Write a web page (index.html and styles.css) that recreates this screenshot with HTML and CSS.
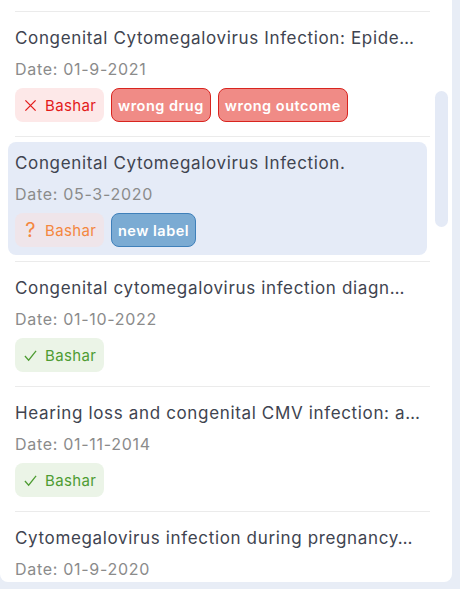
FILE: index.html
```html
<!DOCTYPE html>
<html>
<head>
<meta charset="utf-8">
<link rel="stylesheet" href="styles.css">
</head>
<body>
<div class="panel">
  <div class="list">
    <div class="divider"></div>
    <div class="item">
      <div class="title">Congenital Cytomegalovirus Infection: Epide…</div>
      <div class="date">Date: 01-9-2021</div>
      <div class="chips">
        <span class="chip chip-red"><svg class="ico" viewBox="0 0 14 14"><path d="M1.5 1.5 L12.5 12.5 M12.5 1.5 L1.5 12.5" /></svg>Bashar</span>
        <span class="tag tag-red">wrong drug</span>
        <span class="tag tag-red">wrong outcome</span>
      </div>
    </div>
    <div class="divider"></div>
    <div class="item selected">
      <div class="title">Congenital Cytomegalovirus Infection.</div>
      <div class="date">Date: 05-3-2020</div>
      <div class="chips">
        <span class="chip chip-orange"><span class="q">?</span>Bashar</span>
        <span class="tag tag-blue">new label</span>
      </div>
    </div>
    <div class="divider"></div>
    <div class="item">
      <div class="title">Congenital cytomegalovirus infection diagn…</div>
      <div class="date">Date: 01-10-2022</div>
      <div class="chips">
        <span class="chip chip-green"><svg class="ico" viewBox="0 0 14 14"><path d="M1 7.5 L5 12 L13 2" /></svg>Bashar</span>
      </div>
    </div>
    <div class="divider"></div>
    <div class="item">
      <div class="title">Hearing loss and congenital CMV infection: a…</div>
      <div class="date">Date: 01-11-2014</div>
      <div class="chips">
        <span class="chip chip-green"><svg class="ico" viewBox="0 0 14 14"><path d="M1 7.5 L5 12 L13 2" /></svg>Bashar</span>
      </div>
    </div>
    <div class="divider"></div>
    <div class="item">
      <div class="title">Cytomegalovirus infection during pregnancy…</div>
      <div class="date">Date: 01-9-2020</div>
    </div>
  </div>
  <div class="track"><div class="thumb"></div></div>
</div>
</body>
</html>
```
FILE: styles.css
```css
html, body {
  margin: 0;
  padding: 0;
}
body {
  background: #e8edf6;
  font-family: "Inter", "Noto Sans", sans-serif;
  width: 460px;
  height: 589px;
  overflow: hidden;
}
.panel {
  width: 452px;
  height: 582px;
  background: #ffffff;
  border-radius: 0 0 8px 8px;
  display: flex;
  overflow: hidden;
}
.list {
  width: 430px;
  padding-top: 11px;
  display: flex;
  flex-direction: column;
  flex: none;
}
.divider {
  height: 1px;
  margin-left: 15px;
  background: #ebebeb;
  flex: none;
}
.item {
  margin: 5px 3px 6px 8px;
  padding: 9px 7px 8px;
  border-radius: 8px;
  flex: none;
}
.item.selected {
  background: #e5ebf7;
}
.title {
  font-size: 17px;
  line-height: 24px;
  color: #404450;
  white-space: nowrap;
  letter-spacing: 0.65px;
}
.date {
  margin-top: 7px;
  font-size: 16px;
  line-height: 24px;
  color: #8b8b8b;
  letter-spacing: 0.7px;
}
.chips {
  margin-top: 7px;
  display: flex;
  gap: 7px;
  height: 34px;
}
.chip {
  display: flex;
  align-items: center;
  gap: 8px;
  padding: 0 0 0 9px;
  width: 80px;
  border-radius: 8px;
  font-size: 15px;
  letter-spacing: 0.35px;
}
.ico {
  width: 13px;
  height: 13px;
  fill: none;
  stroke: currentColor;
  stroke-width: 1.4;
  flex: none;
}
.q {
  display: inline-block;
  width: 13px;
  text-align: center;
  font-size: 20px;
  line-height: 1;
}
.chip-red {
  background: #fde8e8;
  color: #e31b1b;
}
.chip-orange {
  background: #efe5ea;
  color: #f4873f;
}
.chip-green {
  background: #ebf4e7;
  color: #4e9c33;
}
.tag {
  display: flex;
  align-items: center;
  padding: 0 6px;
  border-radius: 8px;
  border: 1px solid;
  font-size: 14.5px;
  font-weight: 600;
  letter-spacing: 0.5px;
  color: #ffffff;
  box-sizing: border-box;
  height: 34px;
}
.tag-red {
  background: #f08b86;
  border-color: #d9241f;
}
.tag-blue {
  background: #7babd3;
  border-color: #3f80ba;
}
.track {
  padding-top: 91px;
  padding-left: 5px;
}
.thumb {
  width: 13px;
  height: 136px;
  border-radius: 7px;
  background: #e4eaf6;
}
```
